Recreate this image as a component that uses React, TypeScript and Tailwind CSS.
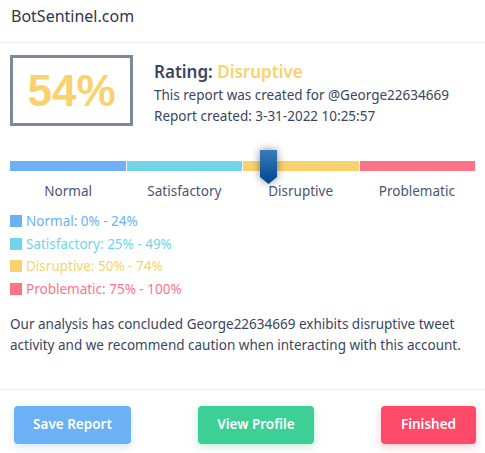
import React from "react";

const segments = [
  { label: "Normal", color: "bg-[#6cb0f5]" },
  { label: "Satisfactory", color: "bg-[#72d4e8]" },
  { label: "Disruptive", color: "bg-[#f9d26d]" },
  { label: "Problematic", color: "bg-[#fd7489]" },
];

const legend = [
  { text: "Normal: 0% - 24%", box: "bg-[#6cb0f5]", fg: "text-[#6cb0f5]" },
  { text: "Satisfactory: 25% - 49%", box: "bg-[#72d4e8]", fg: "text-[#72d4e8]" },
  { text: "Disruptive: 50% - 74%", box: "bg-[#f9d26d]", fg: "text-[#f9d26d]" },
  { text: "Problematic: 75% - 100%", box: "bg-[#fd7489]", fg: "text-[#fd7489]" },
];

export default function App() {
  return (
    <div className="w-[485px] h-[453px] bg-white text-[#3b4560] font-['Noto_Sans',sans-serif] overflow-hidden">
      {/* Header */}
      <div className="h-[43px] border-b border-[#e9ecef] px-[11px] pt-[4px] text-[16px] leading-[24px] text-[#2e3650]">
        BotSentinel.com
      </div>

      {/* Score + rating */}
      <div className="flex px-[10px] pt-[12px]">
        <div className="w-[123px] h-[71px] border-[3px] border-[#7b8a96] flex items-center justify-center">
          <span className="font-['Liberation_Sans',sans-serif] font-bold text-[44px] leading-none text-[#f9d26d]">54%</span>
        </div>
        <div className="ml-[21px] pt-[5px]">
          <div className="text-[17px] leading-[24px] font-semibold text-[#3b4560]">
            Rating: <span className="text-[#f9d26d]">Disruptive</span>
          </div>
          <div className="text-[13.5px] leading-[21px] mt-[1px]">This report was created for @George22634669</div>
          <div className="text-[13.5px] leading-[21px]">Report created: 3-31-2022 10:25:57</div>
        </div>
      </div>

      {/* Scale */}
      <div className="relative mx-[10px] mt-[34px]">
        <div className="flex gap-[1px] h-[10px]">
          {segments.map((s) => (
            <div key={s.label} className={`flex-1 ${s.color}`} />
          ))}
        </div>
        <div className="absolute left-[250px] top-[-11px] drop-shadow-[0_0_4px_rgba(0,0,0,0.45)]">
          <svg width="17" height="34" viewBox="0 0 17 34">
            <defs>
              <linearGradient id="mk" x1="0" y1="0" x2="0" y2="1">
                <stop offset="0" stopColor="#3a7cc0" />
                <stop offset="1" stopColor="#00468a" />
              </linearGradient>
            </defs>
            <path d="M0 0 H17 V27 L8.5 34 L0 27 Z" fill="url(#mk)" />
          </svg>
        </div>
        <div className="flex mt-[10px] text-[13.5px] leading-[20px] text-[#4a5573]">
          {segments.map((s) => (
            <div key={s.label} className="flex-1 text-center">{s.label}</div>
          ))}
        </div>
      </div>

      {/* Legend */}
      <div className="px-[10px] mt-[10px] flex flex-col gap-[2.5px]">
        {legend.map((l) => (
          <div key={l.text} className="flex items-center h-[20px]">
            <div className={`w-[12px] h-[12px] ${l.box}`} />
            <span className={`ml-[4px] text-[13.5px] leading-[20px] ${l.fg}`}>{l.text}</span>
          </div>
        ))}
      </div>

      {/* Summary */}
      <p className="px-[10px] mt-[15px] text-[13.5px] leading-[21px] text-[#3b4560]">
        Our analysis has concluded George22634669 exhibits disruptive tweet activity and we recommend caution when interacting with this account.
      </p>

      {/* Footer */}
      <div className="mt-[33px] border-t border-[#e9ecef] flex items-center justify-between pl-[14px] pr-[9px] pt-[16px]">
        <button className="w-[117px] h-[38px] rounded-[4px] bg-[#6cb0f5] text-white text-[13.5px] font-semibold shadow-[0_3px_8px_rgba(108,176,245,0.3)]">
          Save Report
        </button>
        <button className="w-[116px] h-[38px] rounded-[4px] bg-[#3ccf96] text-white text-[13.5px] font-semibold shadow-[0_3px_8px_rgba(60,207,150,0.3)]">
          View Profile
        </button>
        <button className="w-[95px] h-[38px] rounded-[4px] bg-[#fd4a68] text-white text-[13.5px] font-semibold shadow-[0_3px_8px_rgba(253,74,104,0.3)]">
          Finished
        </button>
      </div>
    </div>
  );
}
